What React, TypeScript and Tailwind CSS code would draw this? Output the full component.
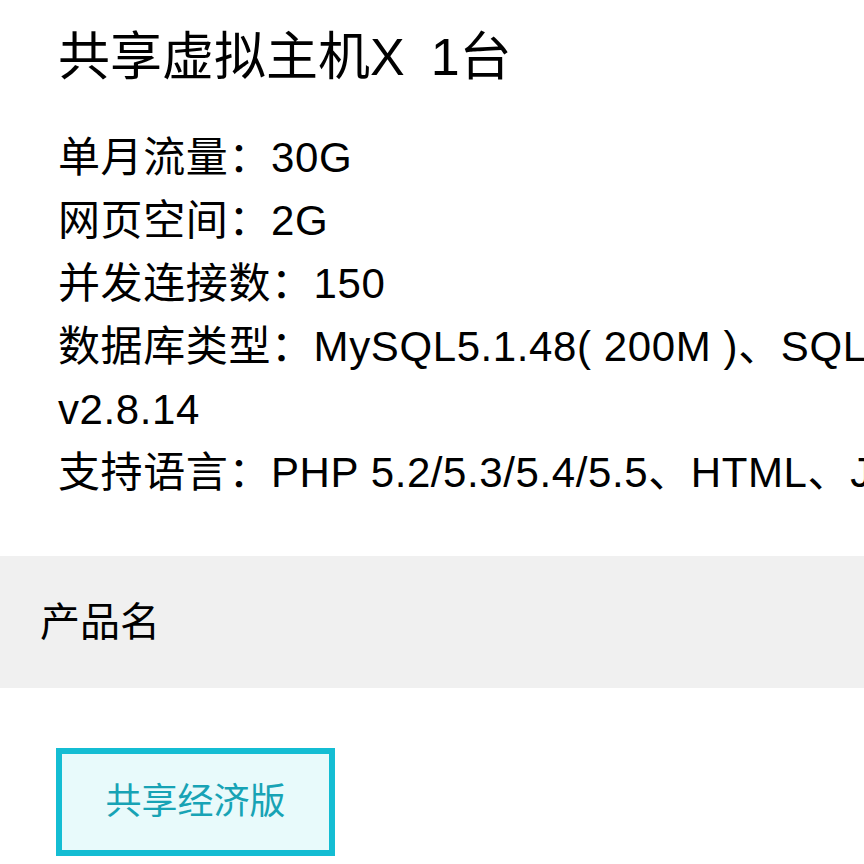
import React from "react";

const font = { fontFamily: '"Liberation Sans", "Noto Sans CJK SC", sans-serif' };

export default function App() {
  const lines = [
    "单月流量：30G",
    "网页空间：2G",
    "并发连接数：150",
    "数据库类型：MySQL5.1.48( 200M )、SQLite",
    "v2.8.14",
    "支持语言：PHP 5.2/5.3/5.4/5.5、HTML、JavaScript",
  ];
  return (
    <div className="w-[864px] h-[864px] overflow-hidden bg-white text-black" style={font}>
      <div className="pl-[58px] pt-[24px]">
        <h1 className="text-[52px] leading-[66px] font-normal whitespace-nowrap">共享虚拟主机X{"\u2002"}1台</h1>
        <div className="mt-[36px] flex flex-col">
          {lines.map((l) => (
            <div key={l} className="text-[42px] leading-[63px] tracking-[0.6px] whitespace-nowrap">
              {l}
            </div>
          ))}
        </div>
      </div>
      <div className="mt-[52px] h-[132px] bg-[#f0f0f0] flex items-center pl-[40px]">
        <span className="text-[40px] leading-none">产品名</span>
      </div>
      <div className="pl-[56px] pt-[60px]">
        <div className="w-[279px] h-[108px] border-[6px] border-[#14bdd3] bg-[#e8fafb] flex items-center justify-center">
          <span className="text-[36px] leading-none text-[#17a3b5]">共享经济版</span>
        </div>
      </div>
    </div>
  );
}
